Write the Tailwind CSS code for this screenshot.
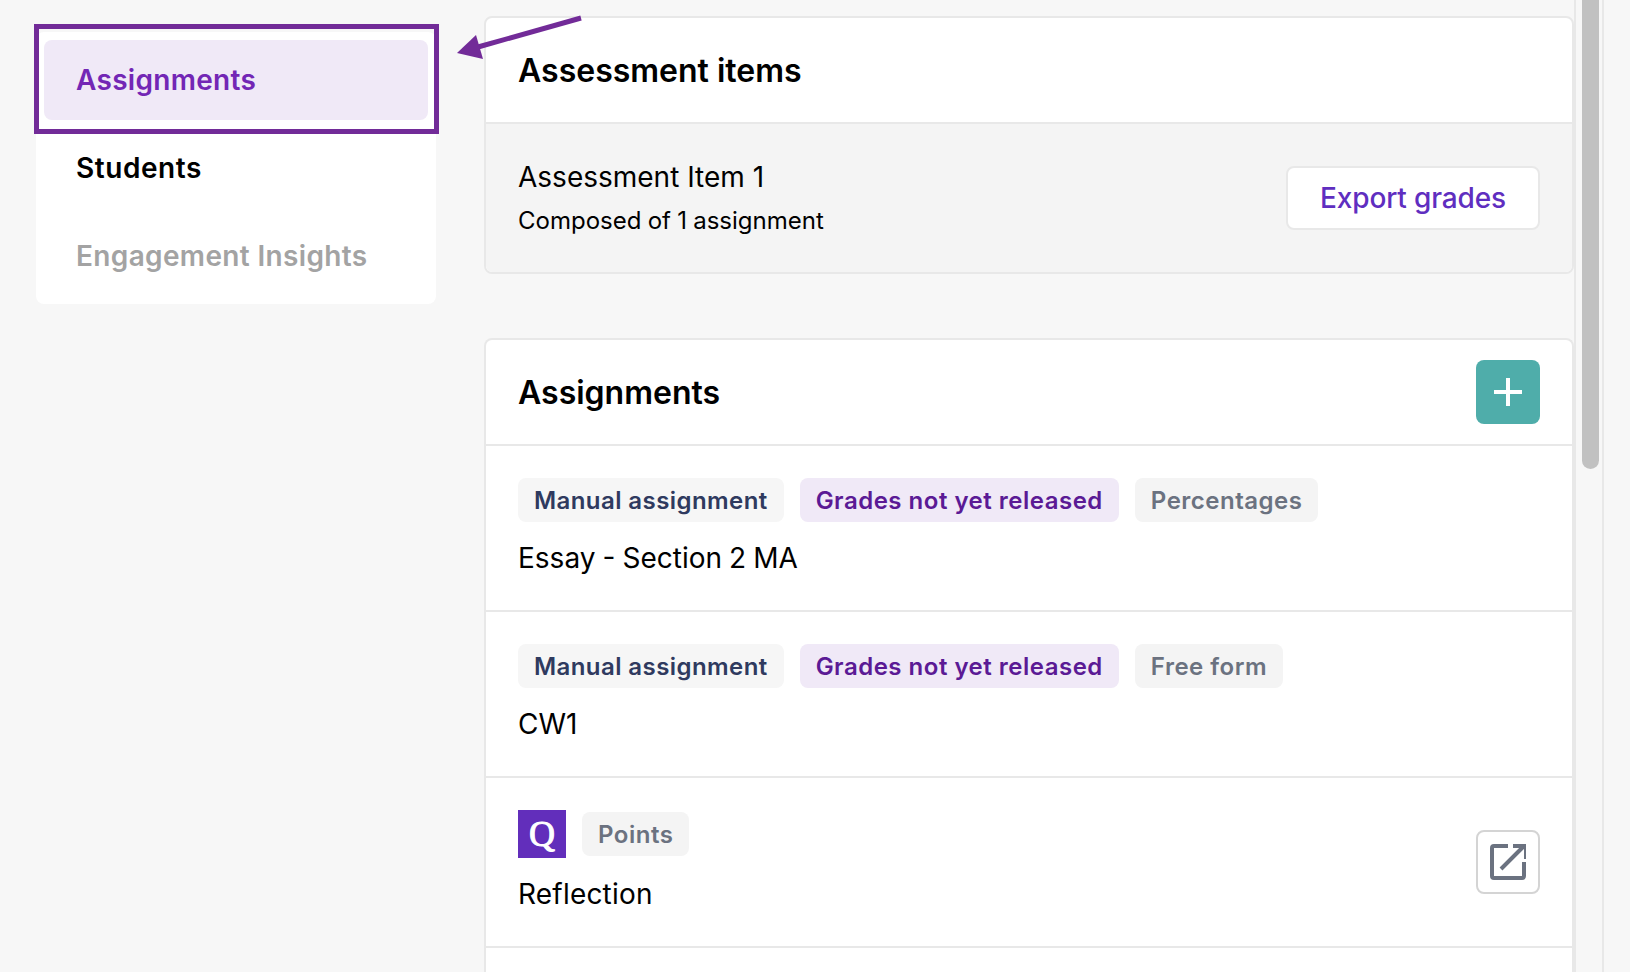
<!DOCTYPE html>
<html lang="en">
<head>
  <meta charset="UTF-8" />
  <title>Assessment items</title>
  <script src="https://cdn.jsdelivr.net/npm/@tailwindcss/browser@4"></script>
</head>
<body class="bg-[#f7f7f7] font-['Inter',sans-serif] text-black">
  <div class="relative flex h-[972px] overflow-hidden">

    <!-- Side nav -->
    <div class="w-[484px] shrink-0 pt-8 pl-9 pr-12">
      <nav class="flex flex-col gap-2 rounded-lg bg-white p-2 text-[28px] font-semibold tracking-[0.3px]">
        <a class="flex h-20 items-center rounded-lg bg-[#f0e9f7] px-8 text-[#7326b5]">Assignments</a>
        <a class="flex h-20 items-center px-8 tracking-[0.55px]">Students</a>
        <a class="flex h-20 items-center px-8 tracking-[0.35px] text-[#a3a3a3]">Engagement Insights</a>
      </nav>
    </div>

    <!-- Main column -->
    <main class="flex w-[1092px] shrink-0 flex-col gap-16 border-r-2 border-[#e8e8e8] pt-4">
      <section class="overflow-hidden rounded-lg border-2 border-[#e8e8e8] bg-white">
        <div class="flex h-[104px] items-center px-8 pt-0.5">
          <h2 class="text-[32px] font-semibold">Assessment items</h2>
        </div>
        <div class="flex h-[150px] items-center justify-between border-t-2 border-[#e8e8e8] bg-[#f4f4f4] px-8">
          <div class="mb-0.5">
            <p class="text-[28px] leading-10">Assessment Item 1</p>
            <p class="mt-2 text-2xl leading-8 [word-spacing:-0.5px]">Composed of 1 assignment</p>
          </div>
          <button class="h-16 w-[254px] rounded-lg border-2 border-[#e8e8e8] bg-white text-[28px] font-medium tracking-[-0.15px] text-[#5f2ec0]">Export grades</button>
        </div>
      </section>

      <section class="flex-1 rounded-t-lg border-2 border-b-0 border-[#e8e8e8] bg-white">
        <div class="flex items-center justify-between px-8 py-5">
          <h2 class="pt-0.5 text-[32px] font-semibold">Assignments</h2>
          <button class="flex size-16 items-center justify-center rounded-lg bg-[#4fadaa]">
            <svg class="size-7" viewBox="0 0 28 28" fill="none" stroke="white" stroke-width="4"><path d="M14 0v28M0 14h28" /></svg>
          </button>
        </div>

        <div class="border-t-2 border-[#e8e8e8] px-8 py-8">
          <div class="flex gap-4 text-2xl font-semibold tracking-[0.5px]">
            <span class="flex h-11 items-center rounded-lg bg-[#f6f6f6] px-4 pt-0.5 tracking-[0.42px] text-[#2f3a5f]">Manual assignment</span>
            <span class="flex h-11 items-center rounded-lg bg-[#f0e9f7] px-4 pt-0.5 text-[#5b1a95]">Grades not yet released</span>
            <span class="flex h-11 items-center rounded-lg bg-[#f4f4f4] px-4 pt-0.5 text-[#6b7280]">Percentages</span>
          </div>
          <p class="mt-4 text-[28px] leading-10 [word-spacing:-0.8px]">Essay - Section 2 MA</p>
        </div>

        <div class="border-t-2 border-[#e8e8e8] px-8 py-8">
          <div class="flex gap-4 text-2xl font-semibold tracking-[0.5px]">
            <span class="flex h-11 items-center rounded-lg bg-[#f6f6f6] px-4 pt-0.5 tracking-[0.42px] text-[#2f3a5f]">Manual assignment</span>
            <span class="flex h-11 items-center rounded-lg bg-[#f0e9f7] px-4 pt-0.5 text-[#5b1a95]">Grades not yet released</span>
            <span class="flex h-11 items-center rounded-lg bg-[#f4f4f4] px-4 pt-0.5 text-[#6b7280]">Free form</span>
          </div>
          <p class="mt-4 text-[28px] leading-10">CW1</p>
        </div>

        <div class="flex items-center justify-between border-t-2 border-[#e8e8e8] px-8 py-8">
          <div>
            <div class="flex items-center gap-4">
              <span class="flex size-12 items-center justify-center bg-[#622ebb] font-['Liberation_Serif',serif] text-[36px] text-white [-webkit-text-stroke:1px_white]">Q</span>
              <span class="flex h-11 items-center rounded-lg bg-[#f4f4f4] px-4 pt-0.5 text-2xl font-semibold tracking-[0.5px] text-[#6b7280]">Points</span>
            </div>
            <p class="mt-4 text-[28px] leading-10 tracking-[0.2px]">Reflection</p>
          </div>
          <button class="flex size-16 items-center justify-center rounded-lg border-2 border-[#d4d4d4]">
            <svg class="size-9" viewBox="0 0 36 36" fill="none" stroke="#6b7280" stroke-width="4">
              <path d="M18 2H4a2 2 0 0 0-2 2v28a2 2 0 0 0 2 2h28a2 2 0 0 0 2-2V18" />
              <path d="M11 25 33 3M23 2h13v13" />
            </svg>
          </button>
        </div>

        <div class="border-t-2 border-[#e8e8e8]"></div>
      </section>
    </main>

    <!-- Scrollbar -->
    <div class="w-[28px] shrink-0 border-r-2 border-[#e8e8e8] pl-1.5">
      <div class="h-[469px] w-[17px] rounded-b-full bg-[#c1c1c1]"></div>
    </div>

    <!-- Annotation: box and arrow over the nav -->
    <div class="absolute left-[34px] top-[24px] h-[110px] w-[405px] border-[5px] border-[#722b98]"></div>
    <svg class="absolute left-[450px] top-[10px]" width="140" height="55" viewBox="0 0 140 55" fill="#722b98">
      <path d="M131 8 28 37" stroke="#722b98" stroke-width="5" fill="none" />
      <path d="M7 43 26 25 33 49Z" />
    </svg>
  </div>
</body>
</html>
